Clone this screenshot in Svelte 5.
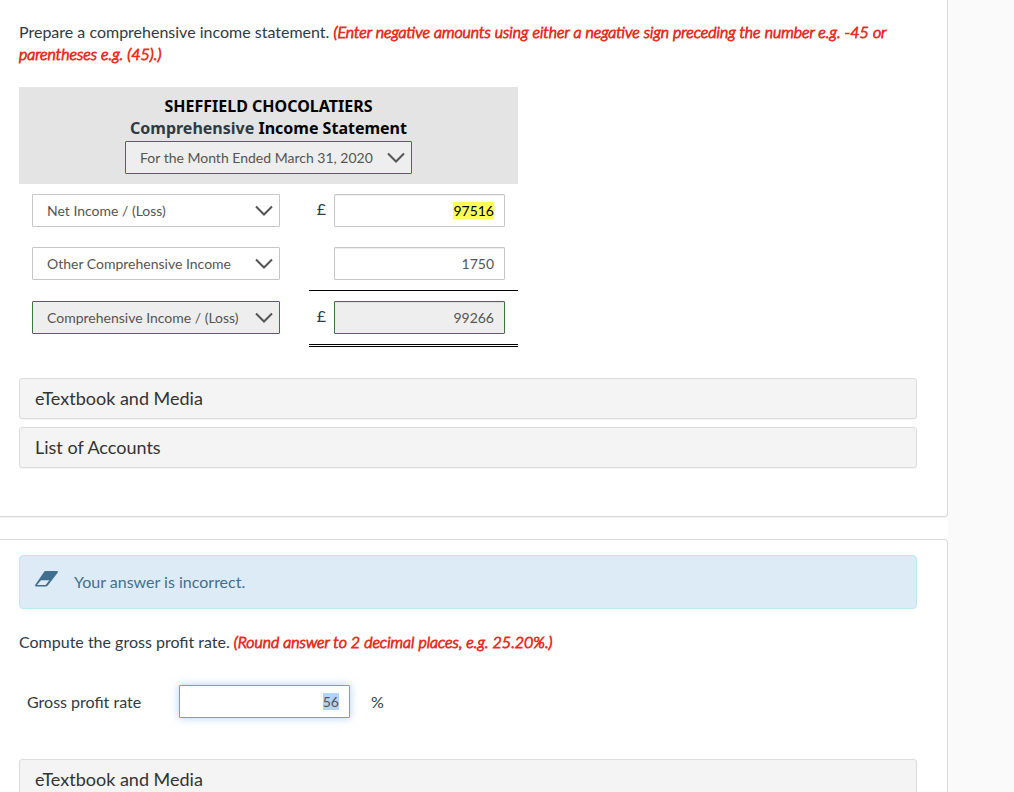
<script>
  /* --------------------------------------------
   * Rows of the statement. `status` picks the box
   * style, `rule` the line drawn under the amount
   */
  let rows = [
    { account: 'Net Income / (Loss)', amount: '97516', currency: '£', status: 'open', rule: 'none', marked: true },
    { account: 'Other Comprehensive Income', amount: '1750', currency: '', status: 'open', rule: 'single' },
    { account: 'Comprehensive Income / (Loss)', amount: '99266', currency: '£', status: 'correct', rule: 'double' }
  ];

  const accounts = rows.map(d => d.account);

  let period = 'For the Month Ended March 31, 2020';
  let grossProfitRate = '56';
</script>

<style>
  :global(body) {
    margin: 0;
    background: #fafafa;
  }
  .page {
    display: flex;
    min-height: 100vh;
    font-family: Lato, 'Liberation Sans', sans-serif;
    font-size: 16px;
    line-height: 22px;
    color: #2d3b45;
  }
  main {
    flex: 1;
    display: flex;
    flex-direction: column;
    gap: 22px;
    background: #fff;
  }
  aside {
    width: 66px;
    background: #fafafa;
  }
  .card {
    box-sizing: border-box;
    padding: 15px 30px 48px 19px;
    border: 1px solid #d9d9d9;
    border-left: none;
    border-radius: 0 4px 4px 0;
    background: #fff;
    box-shadow: 0 1px 1px rgba(0, 0, 0, 0.05);
  }
  .card--top {
    padding-top: 21px;
    border-top: none;
    border-top-right-radius: 0;
  }
  p {
    margin: 0;
  }
  em {
    font-weight: 300;
    color: #e8301f;
    -webkit-text-stroke: 1px #e8301f;
  }

  /* statement */
  table {
    width: 499px;
    margin: 22px 0 31px;
    border-collapse: separate;
    border-spacing: 0;
  }
  th, td {
    padding: 0;
    vertical-align: top;
  }
  thead th {
    padding: 8px 0 10px;
    background: #e4e4e4;
    font-weight: 400;
  }
  .title {
    margin-bottom: 2px;
    font-family: 'Noto Sans', sans-serif;
    font-weight: 700;
    color: #000;
  }
  .title span {
    color: #2d3b45;
  }
  .period {
    width: 287px;
    margin: 0 auto;
  }
  .account {
    padding: 10px 29px 10px 13px;
  }
  .amount {
    width: 209px;
    box-sizing: border-box;
    padding: 10px 13px 10px 8px;
  }
  .amount--single {
    border-bottom: 1px solid #000;
  }
  .amount--double {
    border-bottom: 3px double #000;
  }
  .money {
    display: flex;
    justify-content: flex-end;
    gap: 8px;
    line-height: 30px;
  }

  /* controls */
  .picker {
    display: grid;
    align-items: center;
  }
  .picker select,
  .picker svg {
    grid-area: 1 / 1;
  }
  .picker svg {
    justify-self: end;
    margin-right: 7px;
    pointer-events: none;
  }
  select {
    appearance: none;
    width: 100%;
    height: 33px;
    padding: 0 30px 0 14px;
    border: 1px solid #c7c7c7;
    border-radius: 1px;
    background: #fff;
    font: inherit;
    font-size: 14px;
    color: #555;
  }
  .field {
    box-sizing: border-box;
    display: flex;
    align-items: center;
    justify-content: flex-end;
    width: 171px;
    height: 33px;
    padding: 0 10px;
    border: 1px solid #c7c7c7;
    border-radius: 1px;
    background: #fff;
    box-shadow: inset 0 1px 1px rgba(0, 0, 0, 0.075);
  }
  input {
    field-sizing: content;
    height: 17px;
    padding: 0;
    border: none;
    outline: none;
    background: transparent;
    font: inherit;
    font-size: 14px;
    line-height: 17px;
    text-align: right;
    color: #555;
  }
  .correct select,
  .field.correct {
    border-color: #3c763d;
    background: #eee;
  }
  .marked input {
    background: #ff5;
    color: #000;
  }
  .active {
    border-color: #66a3e0;
    box-shadow: 0 0 8px rgba(102, 163, 224, 0.5);
  }
  .active input {
    background: #b3d3fb;
  }

  .links {
    display: flex;
    flex-direction: column;
    gap: 8px;
  }
  .links button {
    height: 41px;
    padding: 0 15px 2px;
    border: 1px solid #dcdcdc;
    border-radius: 3px;
    background: #f4f4f4;
    box-shadow: 0 1px 1px rgba(0, 0, 0, 0.05);
    font: inherit;
    font-size: 18px;
    text-align: left;
    color: #333;
  }

  /* second question */
  .alert {
    display: flex;
    gap: 16px;
    margin-bottom: 22px;
    padding: 15px;
    border: 1px solid #bce8f1;
    border-radius: 4px;
    background: #ddebf6;
    color: #41708f;
  }
  .rate {
    display: flex;
    align-items: center;
    margin: 32px 0 41px;
    padding-left: 8px;
  }
  .rate label {
    width: 152px;
  }
  .rate .field {
    margin-right: 21px;
  }
</style>

{#snippet chevron()}
  <svg width="18" height="12" viewBox="0 0 18 12" aria-hidden="true">
    <path d="M1 1.5 L9 9.5 L17 1.5" fill="none" stroke="#555" stroke-width="2" />
  </svg>
{/snippet}

<div class="page">
  <main>
    <section class="card card--top">
      <p>Prepare a comprehensive income statement. <em>(Enter negative amounts using either a negative sign preceding the number e.g. -45 or parentheses e.g. (45).)</em></p>

      <table>
        <thead>
          <tr>
            <th colspan="2">
              <div class="title">SHEFFIELD CHOCOLATIERS<br><span>Comprehensive</span> Income Statement</div>
              <div class="period picker correct">
                <select aria-label="Period" bind:value={period}>
                  <option>For the Month Ended March 31, 2020</option>
                </select>
                {@render chevron()}
              </div>
            </th>
          </tr>
        </thead>
        <tbody>
          {#each rows as row}
          <tr>
            <td class="account">
              <div class="picker {row.status}">
                <select aria-label="Account" bind:value={row.account}>
                  {#each accounts as name}
                  <option>{name}</option>
                  {/each}
                </select>
                {@render chevron()}
              </div>
            </td>
            <td class="amount amount--{row.rule}">
              <div class="money">
                <span>{row.currency}</span>
                <div class="field {row.status}" class:marked={row.marked}>
                  <input type="text" aria-label="{row.account} amount" bind:value={row.amount}>
                </div>
              </div>
            </td>
          </tr>
          {/each}
        </tbody>
      </table>

      <div class="links">
        <button type="button">eTextbook and Media</button>
        <button type="button">List of Accounts</button>
      </div>
    </section>

    <section class="card">
      <div class="alert">
        <svg width="23" height="16" viewBox="0 0 23 16" aria-hidden="true">
          <path d="M10.5 0 H22 Q23.4 0.2 22.6 1.8 L13 14.2 Q12 15.6 10.6 15.6 H1 Q-0.4 15.4 0.3 13.8 L9 0.9 Q9.6 0 10.5 0 Z M6 9.2 L2 14.1 H10.6 L14.4 9.2 Z" fill="#41708f" fill-rule="evenodd" />
        </svg>
        <span>Your answer is incorrect.</span>
      </div>

      <p>Compute the gross profit rate. <em>(Round answer to 2 decimal places, e.g. 25.20%.)</em></p>

      <div class="rate">
        <label for="gross-profit-rate">Gross profit rate</label>
        <div class="field active">
          <input id="gross-profit-rate" type="text" bind:value={grossProfitRate}>
        </div>
        <span>%</span>
      </div>

      <div class="links">
        <button type="button">eTextbook and Media</button>
      </div>
    </section>
  </main>
  <aside></aside>
</div>
